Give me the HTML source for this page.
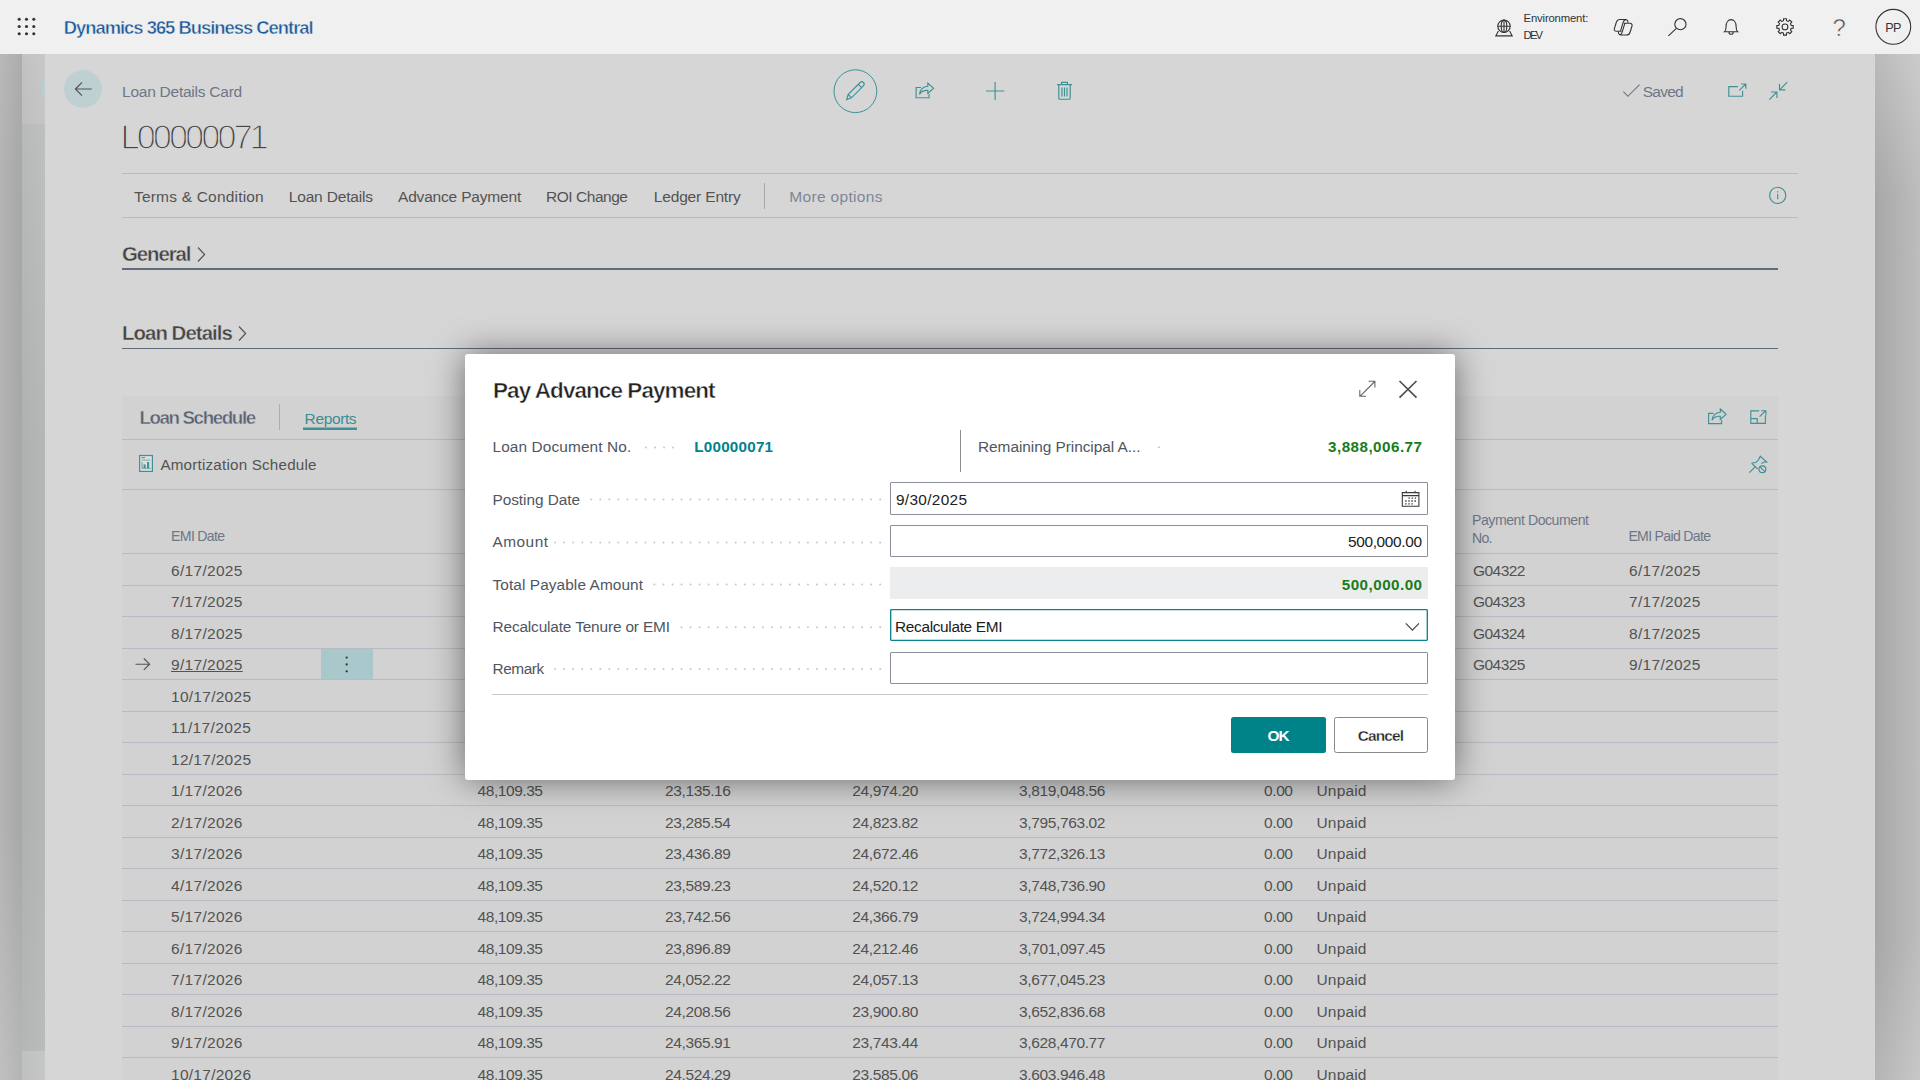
<!DOCTYPE html>
<html lang="en">
<head>
<meta charset="utf-8">
<title>Loan Details Card - Dynamics 365 Business Central</title>
<style>
html,body{margin:0;padding:0;}
body{width:1920px;height:1080px;overflow:hidden;position:relative;background:#d6d6d6;font-family:"Liberation Sans", sans-serif;}
.t{position:absolute;white-space:pre;line-height:1;font-family:"Liberation Sans", sans-serif;}
.abs{position:absolute;}
svg.lay{position:absolute;left:0;top:0;width:1920px;height:1080px;overflow:visible;}
#topbar{left:0;top:0;width:1920px;height:54px;background:#f0f0f0;}
#strip1{left:0;top:54px;width:22px;height:1026px;background:linear-gradient(180deg,rgba(255,255,255,.06) 0,rgba(255,255,255,0) 12%,rgba(255,255,255,0) 75%,rgba(255,255,255,.16) 100%),linear-gradient(90deg,#b4b4b4,#a7a7a7);}
#strip2{left:22px;top:54px;width:23px;height:1026px;background:linear-gradient(90deg,rgba(0,0,0,.03),rgba(0,0,0,0)),linear-gradient(180deg,#c8c8c8 0,#c5c5c5 70px,#bec0c0 70px,#b5b6b6 38%,#b5b6b6 75%,#babcbc 997px,#c5c6c6 997px);overflow:hidden;}
#strip3{left:1875px;top:54px;width:45px;height:1026px;background:linear-gradient(180deg,rgba(255,255,255,.22) 0,rgba(255,255,255,0) 14%,rgba(255,255,255,0) 86%,rgba(255,255,255,.16) 100%),linear-gradient(90deg,#a7a7a7,#bdbdbd);}
#page{left:45px;top:54px;width:1830px;height:1026px;background:#d6d6d6;}
#panel{left:122px;top:396px;width:1656px;height:684px;background:#d2d2d2;}
#selcell{left:321px;top:649px;width:52px;height:30px;background:#a8c8cc;}
#dialog{left:465px;top:354px;width:990px;height:426px;background:#fff;border-radius:3px;box-shadow:0 0 34px rgba(0,0,0,.5);}
.inp{position:absolute;box-sizing:border-box;border:1px solid #8a909b;background:#fff;border-radius:1px;}
#btn-ok{left:1231px;top:717px;width:95px;height:36px;background:#008289;border-radius:2.5px;}
#btn-cancel{left:1334px;top:717px;width:94px;height:36px;box-sizing:border-box;border:1px solid #8a8886;border-radius:2.5px;background:#fff;}
</style>
</head>
<body>
<div class="abs" id="topbar"></div>
<div class="abs" id="strip1"></div>
<div class="abs" id="strip2"><div class="abs" style="left:19px;top:16px;width:38px;height:38px;border-radius:50%;background:#bccdd0;"></div></div>
<div class="abs" id="strip3"></div>
<div class="abs" id="page"></div>
<div class="abs" id="panel"></div>
<div class="abs" id="selcell"></div>
<div class="abs" style="left:64px;top:70px;width:38px;height:38px;border-radius:50%;background:#bfd0d2;"></div>

<svg class="lay" viewBox="0 0 1920 1080" fill="none">
 <g stroke="#b8bbc3" stroke-width="1">
  <path d="M122 173.5H1798"/><path d="M122 217.5H1798"/>
  <path d="M764.5 183V209" stroke="#a4a8af"/>
  <path d="M279.5 404V430" stroke="#a9adb4"/>
  <path d="M122 439.5H1778"/><path d="M122 489.5H1778"/>
  <path d="M122 553.5H1778"/><path d="M122 585.5H1778"/><path d="M122 616.5H1778"/><path d="M122 648.5H1778"/><path d="M122 679.5H1778"/><path d="M122 711.5H1778"/><path d="M122 742.5H1778"/><path d="M122 774.5H1778"/><path d="M122 805.5H1778"/><path d="M122 837.5H1778"/><path d="M122 868.5H1778"/><path d="M122 900.5H1778"/><path d="M122 931.5H1778"/><path d="M122 963.5H1778"/><path d="M122 994.5H1778"/><path d="M122 1026.5H1778"/><path d="M122 1057.5H1778"/>
 </g>
 <path d="M122 269H1778" stroke="#626b78" stroke-width="2"/>
 <path d="M122 348.5H1778" stroke="#626b78" stroke-width="1"/>
 <path d="M303 428.7H357" stroke="#3f9196" stroke-width="2.4"/>
 <!-- back arrow -->
 <path d="M91.8 89H75.5M82 82.4l-6.6 6.6 6.6 6.6" stroke="#555" stroke-width="1.2"/>
 <!-- chevrons -->
 <path d="M198 247.5l6.6 7-6.6 7" stroke="#555" stroke-width="1.2"/>
 <path d="M239 326.5l6.6 7-6.6 7" stroke="#555" stroke-width="1.2"/>
 <!-- header action icons -->
 <g stroke="#3f9196" stroke-width="1.15">
  <circle cx="855.4" cy="91.2" r="21.4" stroke-width="1"/>
  <path d="M846.7 99.5l1.4-5 12-12a2.3 2.3 0 0 1 3.3 3.3l-12 12zM858.3 84.3l3.3 3.3M848.2 94.5l3.2 3.2"/>
  <g transform="translate(915.5 82.5)"><path d="M5.5 5H.6v10.2h13V11.6 M12.3.6l5.8 5.2-5.8 5.2V7.9C8.3 7.7 5.6 9 4 11.9 4.6 7 7.6 4.2 12.3 3.8z"/></g>
  <path d="M986 91h18.2M995.1 81.9v18.2"/>
  <path d="M1057 84.6h15M1061.6 84.4v-2h5.8v2M1058.8 84.8v13.4a1 1 0 0 0 1 1h9.4a1 1 0 0 0 1-1V84.8M1062 87.6v8.8M1064.5 87.6v8.8M1067 87.6v8.8"/>
  <path d="M1738 86.6h-9.2v9.6h13.8v-5.4M1739.3 90.3l6.3-6.2M1741 84h4.8v4.8"/>
  <path d="M1787.2 82.2l-7.6 7.6M1779.5 84v5.9h5.9M1769.3 99.6l7.6-7.6M1771 92h5.9v5.9"/>
  <circle cx="1777.700" cy="195.400" r="8.100"/>
  <path d="M1777.700 194v5.300M1777.700 191.200v1.300"/>
  <g transform="translate(1708 408.4)"><path d="M5.5 5H.6v10.2h13V11.6 M12.3.6l5.8 5.2-5.8 5.2V7.9C8.3 7.7 5.6 9 4 11.9 4.6 7 7.6 4.2 12.3 3.8z"/></g>
  <path d="M1759.2 410.9h-8.4v12.4h14.6v-7.6M1750.8 418.6h6.4v4.7M1759.6 416.6l5.800-5.800M1761.200 410.700h4.700v4.700"/>
  <path d="M1749.3 472.700l6.300-6.300M1751.600 463.200l4.400-.900c1.800-1.100 3.200-3 4.300-6l6.300 5.600c-1.800 0-3.700.5-5.200 1.500M1751.600 463.200l6 5.800"/>
  <circle cx="1762.400" cy="469.200" r="3.400"/><path d="M1760 466.800l4.800 4.800"/>
  <rect x="139.600" y="455.500" width="12.800" height="15.900" fill="rgba(255,255,255,.3)" stroke-width="1.200"/>
  <path d="M141.500 457.700h3.600" stroke-width="1"/><path d="M141.500 460.100h9" stroke-width="1" opacity=".65"/>
  <path d="M142 462v6.300h8.700" stroke-width="1" opacity=".8"/>
  <path d="M144.600 468v-3.400M148.100 468v-6" stroke-width="2.100"/>
 </g>
 <path d="M1623.4 91.6l4.4 4.7 11.8-11.6" stroke="#6e7687" stroke-width="1.15"/>
 <!-- row indicator + more dots -->
 <path d="M135.5 664.2h14M143.8 658.5l5.8 5.7-5.8 5.7" stroke="#555" stroke-width="1.15"/>
 <g fill="#333"><circle cx="346.7" cy="657.6" r="1.15"/><circle cx="346.7" cy="664.4" r="1.15"/><circle cx="346.7" cy="671.3" r="1.15"/></g>
</svg>
<div id="page-text">
<span class="t" style="left:63.70px;top:19.00px;font-size:18.4px;color:#185a9a;font-weight:bold;letter-spacing:-1.002px;-webkit-text-stroke:0.45px #f0f0f0;">Dynamics 365 Business Central</span>
<span class="t" style="left:1523.60px;top:13.00px;font-size:11.3px;color:#333;letter-spacing:-0.169px;">Environment:</span>
<span class="t" style="left:1523.60px;top:30.00px;font-size:11.3px;color:#333;letter-spacing:-1.867px;">DEV</span>
<span class="t" style="left:1885.30px;top:22.00px;font-size:12.6px;color:#333;letter-spacing:-0.613px;">PP</span>
<span class="t" style="left:1832.40px;top:16.00px;font-size:24.0px;color:#444;-webkit-text-stroke:0.55px #f0f0f0;">?</span>
<span class="t" style="left:122.00px;top:84.00px;font-size:15.5px;color:#6e7687;letter-spacing:-0.242px;">Loan Details Card</span>
<span class="t" style="left:120.60px;top:120.00px;font-size:34.6px;color:#444;letter-spacing:-3.110px;-webkit-text-stroke:1.3px #d6d6d6;">L00000071</span>
<span class="t" style="left:134.00px;top:189.00px;font-size:15.5px;color:#535353;letter-spacing:0.194px;">Terms &amp; Condition</span>
<span class="t" style="left:288.75px;top:189.00px;font-size:15.5px;color:#535353;letter-spacing:-0.175px;">Loan Details</span>
<span class="t" style="left:398.00px;top:189.00px;font-size:15.5px;color:#535353;letter-spacing:-0.182px;">Advance Payment</span>
<span class="t" style="left:546.00px;top:189.00px;font-size:15.5px;color:#535353;letter-spacing:-0.464px;">ROI Change</span>
<span class="t" style="left:653.75px;top:189.00px;font-size:15.5px;color:#535353;letter-spacing:-0.159px;">Ledger Entry</span>
<span class="t" style="left:789.25px;top:189.00px;font-size:15.5px;color:#7e8697;letter-spacing:0.331px;">More options</span>
<span class="t" style="left:1642.70px;top:84.00px;font-size:15.5px;color:#6e7687;letter-spacing:-0.738px;">Saved</span>
<span class="t" style="left:122.00px;top:244.00px;font-size:20.4px;color:#444;font-weight:bold;letter-spacing:-1.090px;-webkit-text-stroke:0.4px #d6d6d6;">General</span>
<span class="t" style="left:122.00px;top:323.00px;font-size:20.4px;color:#444;font-weight:bold;letter-spacing:-0.950px;-webkit-text-stroke:0.4px #d6d6d6;">Loan Details</span>
<span class="t" style="left:139.40px;top:409.00px;font-size:18.8px;color:#596172;font-weight:bold;letter-spacing:-1.398px;-webkit-text-stroke:0.4px #d2d2d2;">Loan Schedule</span>
<span class="t" style="left:304.60px;top:411.00px;font-size:15.5px;color:#3d8e93;letter-spacing:-0.380px;">Reports</span>
<span class="t" style="left:160.40px;top:457.00px;font-size:15.2px;color:#535353;letter-spacing:0.207px;">Amortization Schedule</span>
<span class="t" style="left:171.10px;top:529.00px;font-size:14.1px;color:#6e7687;letter-spacing:-0.679px;">EMI Date</span>
<span class="t" style="left:1472.00px;top:513.00px;font-size:14.1px;color:#6e7687;letter-spacing:-0.452px;">Payment Document</span>
<span class="t" style="left:1472.00px;top:531.00px;font-size:14.1px;color:#6e7687;letter-spacing:-0.719px;">No.</span>
<span class="t" style="left:1628.40px;top:529.00px;font-size:14.1px;color:#6e7687;letter-spacing:-0.690px;">EMI Paid Date</span>
<span class="t" style="left:171.00px;top:563.00px;font-size:15.5px;color:#535353;letter-spacing:0.304px;">6/17/2025</span>
<span class="t" style="left:1473.00px;top:563.00px;font-size:15.5px;color:#535353;letter-spacing:-0.534px;">G04322</span>
<span class="t" style="left:1629.00px;top:563.00px;font-size:15.5px;color:#535353;letter-spacing:0.304px;">6/17/2025</span>
<span class="t" style="left:171.00px;top:594.00px;font-size:15.5px;color:#535353;letter-spacing:0.304px;">7/17/2025</span>
<span class="t" style="left:1473.00px;top:594.00px;font-size:15.5px;color:#535353;letter-spacing:-0.534px;">G04323</span>
<span class="t" style="left:1629.00px;top:594.00px;font-size:15.5px;color:#535353;letter-spacing:0.304px;">7/17/2025</span>
<span class="t" style="left:171.00px;top:626.00px;font-size:15.5px;color:#535353;letter-spacing:0.304px;">8/17/2025</span>
<span class="t" style="left:1473.00px;top:626.00px;font-size:15.5px;color:#535353;letter-spacing:-0.534px;">G04324</span>
<span class="t" style="left:1629.00px;top:626.00px;font-size:15.5px;color:#535353;letter-spacing:0.304px;">8/17/2025</span>
<span class="t" style="left:171.00px;top:657.00px;font-size:15.5px;color:#535353;letter-spacing:0.304px;text-decoration:underline;text-decoration-thickness:1px;text-underline-offset:1px;">9/17/2025</span>
<span class="t" style="left:1473.00px;top:657.00px;font-size:15.5px;color:#535353;letter-spacing:-0.534px;">G04325</span>
<span class="t" style="left:1629.00px;top:657.00px;font-size:15.5px;color:#535353;letter-spacing:0.304px;">9/17/2025</span>
<span class="t" style="left:171.00px;top:689.00px;font-size:15.5px;color:#535353;letter-spacing:0.269px;">10/17/2025</span>
<span class="t" style="left:171.00px;top:720.00px;font-size:15.5px;color:#535353;letter-spacing:0.396px;">11/17/2025</span>
<span class="t" style="left:171.00px;top:752.00px;font-size:15.5px;color:#535353;letter-spacing:0.269px;">12/17/2025</span>
<span class="t" style="left:171.00px;top:783.00px;font-size:15.5px;color:#535353;letter-spacing:0.304px;">1/17/2026</span>
<span class="t" style="left:477.60px;top:783.00px;font-size:15.5px;color:#535353;letter-spacing:-0.446px;">48,109.35</span>
<span class="t" style="left:665.00px;top:783.00px;font-size:15.5px;color:#535353;letter-spacing:-0.371px;">23,135.16</span>
<span class="t" style="left:852.30px;top:783.00px;font-size:15.5px;color:#535353;letter-spacing:-0.371px;">24,974.20</span>
<span class="t" style="left:1019.00px;top:783.00px;font-size:15.5px;color:#535353;letter-spacing:-0.365px;">3,819,048.56</span>
<span class="t" style="left:1264.00px;top:783.00px;font-size:15.5px;color:#535353;letter-spacing:-0.391px;">0.00</span>
<span class="t" style="left:1316.50px;top:783.00px;font-size:15.5px;color:#535353;letter-spacing:0.175px;">Unpaid</span>
<span class="t" style="left:171.00px;top:815.00px;font-size:15.5px;color:#535353;letter-spacing:0.304px;">2/17/2026</span>
<span class="t" style="left:477.60px;top:815.00px;font-size:15.5px;color:#535353;letter-spacing:-0.446px;">48,109.35</span>
<span class="t" style="left:665.00px;top:815.00px;font-size:15.5px;color:#535353;letter-spacing:-0.371px;">23,285.54</span>
<span class="t" style="left:852.30px;top:815.00px;font-size:15.5px;color:#535353;letter-spacing:-0.371px;">24,823.82</span>
<span class="t" style="left:1019.00px;top:815.00px;font-size:15.5px;color:#535353;letter-spacing:-0.365px;">3,795,763.02</span>
<span class="t" style="left:1264.00px;top:815.00px;font-size:15.5px;color:#535353;letter-spacing:-0.391px;">0.00</span>
<span class="t" style="left:1316.50px;top:815.00px;font-size:15.5px;color:#535353;letter-spacing:0.175px;">Unpaid</span>
<span class="t" style="left:171.00px;top:846.00px;font-size:15.5px;color:#535353;letter-spacing:0.304px;">3/17/2026</span>
<span class="t" style="left:477.60px;top:846.00px;font-size:15.5px;color:#535353;letter-spacing:-0.446px;">48,109.35</span>
<span class="t" style="left:665.00px;top:846.00px;font-size:15.5px;color:#535353;letter-spacing:-0.371px;">23,436.89</span>
<span class="t" style="left:852.30px;top:846.00px;font-size:15.5px;color:#535353;letter-spacing:-0.371px;">24,672.46</span>
<span class="t" style="left:1019.00px;top:846.00px;font-size:15.5px;color:#535353;letter-spacing:-0.365px;">3,772,326.13</span>
<span class="t" style="left:1264.00px;top:846.00px;font-size:15.5px;color:#535353;letter-spacing:-0.391px;">0.00</span>
<span class="t" style="left:1316.50px;top:846.00px;font-size:15.5px;color:#535353;letter-spacing:0.175px;">Unpaid</span>
<span class="t" style="left:171.00px;top:878.00px;font-size:15.5px;color:#535353;letter-spacing:0.304px;">4/17/2026</span>
<span class="t" style="left:477.60px;top:878.00px;font-size:15.5px;color:#535353;letter-spacing:-0.446px;">48,109.35</span>
<span class="t" style="left:665.00px;top:878.00px;font-size:15.5px;color:#535353;letter-spacing:-0.371px;">23,589.23</span>
<span class="t" style="left:852.30px;top:878.00px;font-size:15.5px;color:#535353;letter-spacing:-0.371px;">24,520.12</span>
<span class="t" style="left:1019.00px;top:878.00px;font-size:15.5px;color:#535353;letter-spacing:-0.365px;">3,748,736.90</span>
<span class="t" style="left:1264.00px;top:878.00px;font-size:15.5px;color:#535353;letter-spacing:-0.391px;">0.00</span>
<span class="t" style="left:1316.50px;top:878.00px;font-size:15.5px;color:#535353;letter-spacing:0.175px;">Unpaid</span>
<span class="t" style="left:171.00px;top:909.00px;font-size:15.5px;color:#535353;letter-spacing:0.304px;">5/17/2026</span>
<span class="t" style="left:477.60px;top:909.00px;font-size:15.5px;color:#535353;letter-spacing:-0.446px;">48,109.35</span>
<span class="t" style="left:665.00px;top:909.00px;font-size:15.5px;color:#535353;letter-spacing:-0.371px;">23,742.56</span>
<span class="t" style="left:852.30px;top:909.00px;font-size:15.5px;color:#535353;letter-spacing:-0.371px;">24,366.79</span>
<span class="t" style="left:1019.00px;top:909.00px;font-size:15.5px;color:#535353;letter-spacing:-0.365px;">3,724,994.34</span>
<span class="t" style="left:1264.00px;top:909.00px;font-size:15.5px;color:#535353;letter-spacing:-0.391px;">0.00</span>
<span class="t" style="left:1316.50px;top:909.00px;font-size:15.5px;color:#535353;letter-spacing:0.175px;">Unpaid</span>
<span class="t" style="left:171.00px;top:941.00px;font-size:15.5px;color:#535353;letter-spacing:0.304px;">6/17/2026</span>
<span class="t" style="left:477.60px;top:941.00px;font-size:15.5px;color:#535353;letter-spacing:-0.446px;">48,109.35</span>
<span class="t" style="left:665.00px;top:941.00px;font-size:15.5px;color:#535353;letter-spacing:-0.371px;">23,896.89</span>
<span class="t" style="left:852.30px;top:941.00px;font-size:15.5px;color:#535353;letter-spacing:-0.371px;">24,212.46</span>
<span class="t" style="left:1019.00px;top:941.00px;font-size:15.5px;color:#535353;letter-spacing:-0.365px;">3,701,097.45</span>
<span class="t" style="left:1264.00px;top:941.00px;font-size:15.5px;color:#535353;letter-spacing:-0.391px;">0.00</span>
<span class="t" style="left:1316.50px;top:941.00px;font-size:15.5px;color:#535353;letter-spacing:0.175px;">Unpaid</span>
<span class="t" style="left:171.00px;top:972.00px;font-size:15.5px;color:#535353;letter-spacing:0.304px;">7/17/2026</span>
<span class="t" style="left:477.60px;top:972.00px;font-size:15.5px;color:#535353;letter-spacing:-0.446px;">48,109.35</span>
<span class="t" style="left:665.00px;top:972.00px;font-size:15.5px;color:#535353;letter-spacing:-0.371px;">24,052.22</span>
<span class="t" style="left:852.30px;top:972.00px;font-size:15.5px;color:#535353;letter-spacing:-0.371px;">24,057.13</span>
<span class="t" style="left:1019.00px;top:972.00px;font-size:15.5px;color:#535353;letter-spacing:-0.365px;">3,677,045.23</span>
<span class="t" style="left:1264.00px;top:972.00px;font-size:15.5px;color:#535353;letter-spacing:-0.391px;">0.00</span>
<span class="t" style="left:1316.50px;top:972.00px;font-size:15.5px;color:#535353;letter-spacing:0.175px;">Unpaid</span>
<span class="t" style="left:171.00px;top:1004.00px;font-size:15.5px;color:#535353;letter-spacing:0.304px;">8/17/2026</span>
<span class="t" style="left:477.60px;top:1004.00px;font-size:15.5px;color:#535353;letter-spacing:-0.446px;">48,109.35</span>
<span class="t" style="left:665.00px;top:1004.00px;font-size:15.5px;color:#535353;letter-spacing:-0.371px;">24,208.56</span>
<span class="t" style="left:852.30px;top:1004.00px;font-size:15.5px;color:#535353;letter-spacing:-0.371px;">23,900.80</span>
<span class="t" style="left:1019.00px;top:1004.00px;font-size:15.5px;color:#535353;letter-spacing:-0.365px;">3,652,836.68</span>
<span class="t" style="left:1264.00px;top:1004.00px;font-size:15.5px;color:#535353;letter-spacing:-0.391px;">0.00</span>
<span class="t" style="left:1316.50px;top:1004.00px;font-size:15.5px;color:#535353;letter-spacing:0.175px;">Unpaid</span>
<span class="t" style="left:171.00px;top:1035.00px;font-size:15.5px;color:#535353;letter-spacing:0.304px;">9/17/2026</span>
<span class="t" style="left:477.60px;top:1035.00px;font-size:15.5px;color:#535353;letter-spacing:-0.446px;">48,109.35</span>
<span class="t" style="left:665.00px;top:1035.00px;font-size:15.5px;color:#535353;letter-spacing:-0.371px;">24,365.91</span>
<span class="t" style="left:852.30px;top:1035.00px;font-size:15.5px;color:#535353;letter-spacing:-0.371px;">23,743.44</span>
<span class="t" style="left:1019.00px;top:1035.00px;font-size:15.5px;color:#535353;letter-spacing:-0.365px;">3,628,470.77</span>
<span class="t" style="left:1264.00px;top:1035.00px;font-size:15.5px;color:#535353;letter-spacing:-0.391px;">0.00</span>
<span class="t" style="left:1316.50px;top:1035.00px;font-size:15.5px;color:#535353;letter-spacing:0.175px;">Unpaid</span>
<span class="t" style="left:171.00px;top:1067.00px;font-size:15.5px;color:#535353;letter-spacing:0.269px;">10/17/2026</span>
<span class="t" style="left:477.60px;top:1067.00px;font-size:15.5px;color:#535353;letter-spacing:-0.446px;">48,109.35</span>
<span class="t" style="left:665.00px;top:1067.00px;font-size:15.5px;color:#535353;letter-spacing:-0.371px;">24,524.29</span>
<span class="t" style="left:852.30px;top:1067.00px;font-size:15.5px;color:#535353;letter-spacing:-0.371px;">23,585.06</span>
<span class="t" style="left:1019.00px;top:1067.00px;font-size:15.5px;color:#535353;letter-spacing:-0.365px;">3,603,946.48</span>
<span class="t" style="left:1264.00px;top:1067.00px;font-size:15.5px;color:#535353;letter-spacing:-0.391px;">0.00</span>
<span class="t" style="left:1316.50px;top:1067.00px;font-size:15.5px;color:#535353;letter-spacing:0.175px;">Unpaid</span>
</div>

<svg class="lay" viewBox="0 0 1920 1080" fill="none">
 <g fill="#333"><circle cx="19.2" cy="19.2" r="1.55"/><circle cx="19.2" cy="26.5" r="1.55"/><circle cx="19.2" cy="33.8" r="1.55"/><circle cx="26.5" cy="19.2" r="1.55"/><circle cx="26.5" cy="26.5" r="1.55"/><circle cx="26.5" cy="33.8" r="1.55"/><circle cx="33.8" cy="19.2" r="1.55"/><circle cx="33.8" cy="26.5" r="1.55"/><circle cx="33.8" cy="33.8" r="1.55"/></g>
 <g stroke="#333" stroke-width="1.1">
  <circle cx="1504" cy="26.3" r="6.2"/><ellipse cx="1504" cy="26.3" rx="2.8" ry="6.2"/><path d="M1497.8 26.3h12.4M1504 20.1v12.4"/>
  <path d="M1498.4 31l-2.6 4.9h16.4l-2.6-4.9"/>
  <path d="M1621.500 31.300h-5.200a2 2 0 0 1-1.900-2.700l2-6.600a3.600 3.600 0 0 1 3.400-2.500h5.600a2.500 2.500 0 0 1 2.400 3.300M1625.800 19.600c-1.400.300-2.300 1.300-2.700 2.700l-2.500 8.600"/>
  <path d="M1623.700 23.300h6.400a2 2 0 0 1 1.900 2.700l-2 6.500a3.600 3.600 0 0 1-3.400 2.500h-5.600a2.500 2.500 0 0 1-2.400-3.300M1624.800 23.400l-2.700 8.900c-.4 1.300-1.300 2.300-2.500 2.600"/>
  <circle cx="1680.4" cy="24.2" r="5.6"/><path d="M1676.4 28.3l-8 7.6"/>
  <path d="M1724.4 31.800c1.500-1.300 1.700-3 1.700-5.400 0-4 2-6.800 5-6.800s5 2.800 5 6.800c0 2.400.2 4.100 1.700 5.400zM1729 32.200a2.100 2.100 0 0 0 4.200 0"/>
  <circle cx="1785" cy="26.900" r="2.900"/>
  <path d="M1793.18 25.47 L1793.18 28.33 L1791.22 28.39 L1790.46 30.24 L1791.79 31.67 L1789.77 33.69 L1788.34 32.36 L1786.49 33.12 L1786.43 35.08 L1783.57 35.08 L1783.51 33.12 L1781.66 32.36 L1780.23 33.69 L1778.21 31.67 L1779.54 30.24 L1778.78 28.39 L1776.82 28.33 L1776.82 25.47 L1778.78 25.41 L1779.54 23.56 L1778.21 22.13 L1780.23 20.11 L1781.66 21.44 L1783.51 20.68 L1783.57 18.72 L1786.43 18.72 L1786.49 20.68 L1788.34 21.44 L1789.77 20.11 L1791.79 22.13 L1790.46 23.56 L1791.22 25.41Z"/>
  <circle cx="1893.3" cy="26.800" r="17.400"/>
 </g>
</svg>

<div class="abs" id="dialog"></div>
<div class="inp" style="left:890px;top:482px;width:538px;height:33px;"></div>
<div class="inp" style="left:890px;top:525px;width:538px;height:32px;"></div>
<div class="abs" style="left:890px;top:567px;width:538px;height:32px;background:#ecedef;"></div>
<div class="inp" style="left:890px;top:609px;width:538px;height:32px;border:1px solid #0b858b;box-shadow:inset 0 0 0 .35px #0b858b;"></div>
<div class="inp" style="left:890px;top:652px;width:538px;height:32px;"></div>
<div class="abs" id="btn-ok"></div>
<div class="abs" id="btn-cancel"></div>
<svg class="lay" viewBox="0 0 1920 1080" fill="none">
 <path d="M960.500 430V472" stroke="#8e8e8e" stroke-width="1"/>
 <path d="M492 694.5H1428" stroke="#c8cace" stroke-width="1"/>
 <g stroke="#c4c7cd" stroke-width="2" stroke-linecap="round" stroke-dasharray="0.01 9.02">
  <path d="M673.100 447.500H640"/>
  <path d="M880.200 499.500H587"/><path d="M880.200 542.500H551"/><path d="M880.200 584.500H650"/><path d="M880.200 627.300H677"/><path d="M880.200 669H551"/>
 </g>
 <circle cx="1158.800" cy="447.300" r="1" fill="#c4c7cd"/>
 <path d="M1360 396.300L1374.700 381.500M1368.600 381.300h6.300v6.300M1359.800 390v6.300h6.300" stroke="#666" stroke-width="1.1"/>
 <path d="M1399.500 381l17 16.600M1416.500 381l-17 16.600" stroke="#505050" stroke-width="1.700"/>
 <g stroke="#3a3a3a" stroke-width="1.1">
  <path d="M1402.300 492.600h16.600v13.700h-16.600zM1402.300 495.600h16.600M1406.200 490.700v2.600M1415 490.700v2.600"/>
  <path d="M1408.500 498.200h9M1405.200 501h12.300M1405.200 503.800h9" stroke-dasharray="1.4 1.700" stroke-width="1.300"/>
 </g>
 <path d="M1405.800 623.300l6.600 6.800 6.600-6.800" stroke="#444" stroke-width="1.2"/>
</svg>
<div id="dialog-text" role="dialog" aria-label="Pay Advance Payment">
<span class="t" style="left:493.00px;top:380.00px;font-size:22.5px;color:#212121;font-weight:bold;letter-spacing:-0.928px;-webkit-text-stroke:0.5px #fff;">Pay Advance Payment</span>
<span class="t" style="left:492.50px;top:439.00px;font-size:15.4px;color:#505662;letter-spacing:0.113px;">Loan Document No.</span>
<span class="t" style="left:694.25px;top:439.00px;font-size:15.2px;color:#00838c;font-weight:bold;letter-spacing:0.243px;">L00000071</span>
<span class="t" style="left:978.00px;top:439.00px;font-size:15.4px;color:#505662;letter-spacing:-0.039px;">Remaining Principal A...</span>
<span class="t" style="left:1328.00px;top:439.00px;font-size:15.2px;color:#1a7c1a;font-weight:bold;letter-spacing:0.483px;">3,888,006.77</span>
<span class="t" style="left:492.50px;top:492.00px;font-size:15.4px;color:#505662;letter-spacing:-0.057px;">Posting Date</span>
<span class="t" style="left:896.00px;top:492.00px;font-size:15.4px;color:#212121;letter-spacing:0.314px;">9/30/2025</span>
<span class="t" style="left:492.50px;top:534.00px;font-size:15.4px;color:#505662;letter-spacing:0.491px;">Amount</span>
<span class="t" style="left:1348.00px;top:534.00px;font-size:15.4px;color:#212121;letter-spacing:-0.337px;">500,000.00</span>
<span class="t" style="left:492.50px;top:577.00px;font-size:15.4px;color:#505662;letter-spacing:0.086px;">Total Payable Amount</span>
<span class="t" style="left:1341.80px;top:577.00px;font-size:15.2px;color:#1a7c1a;font-weight:bold;letter-spacing:0.465px;">500,000.00</span>
<span class="t" style="left:492.50px;top:619.00px;font-size:15.4px;color:#505662;letter-spacing:-0.149px;">Recalculate Tenure or EMI</span>
<span class="t" style="left:895.00px;top:619.00px;font-size:15.4px;color:#212121;letter-spacing:-0.326px;">Recalculate EMI</span>
<span class="t" style="left:492.50px;top:661.00px;font-size:15.4px;color:#505662;letter-spacing:-0.435px;">Remark</span>
<span class="t" style="left:1267.60px;top:728.00px;font-size:15.4px;color:#ffffff;font-weight:bold;letter-spacing:-1.094px;">OK</span>
<span class="t" style="left:1357.80px;top:728.00px;font-size:15.4px;color:#212121;font-weight:bold;letter-spacing:-0.837px;-webkit-text-stroke:0.3px #fff;">Cancel</span>
</div>
</body>
</html>
